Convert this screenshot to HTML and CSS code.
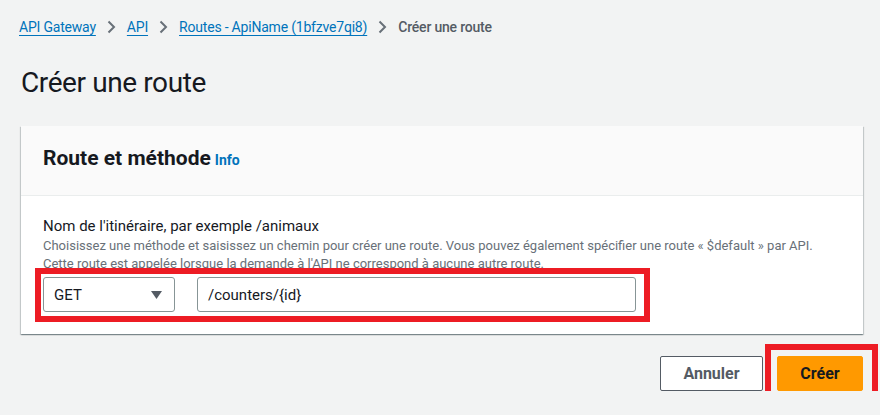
FILE: index.html
```html
<!DOCTYPE html>
<html lang="fr">
<head>
<meta charset="utf-8">
<title>Créer une route</title>
<link rel="stylesheet" href="styles.css">
</head>
<body>
<div class="page">
  <nav class="breadcrumbs">
    <a class="crumb" href="#">API Gateway</a>
    <svg class="chev" width="9" height="14" viewBox="0 0 9 14"><path d="M1.5 1.5 L7 7 L1.5 12.5" fill="none" stroke="#687078" stroke-width="2"/></svg>
    <a class="crumb" href="#">API</a>
    <svg class="chev" width="9" height="14" viewBox="0 0 9 14"><path d="M1.5 1.5 L7 7 L1.5 12.5" fill="none" stroke="#687078" stroke-width="2"/></svg>
    <a class="crumb" href="#">Routes - ApiName (1bfzve7qi8)</a>
    <svg class="chev" width="9" height="14" viewBox="0 0 9 14"><path d="M1.5 1.5 L7 7 L1.5 12.5" fill="none" stroke="#687078" stroke-width="2"/></svg>
    <span class="crumb-current">Créer une route</span>
  </nav>

  <h1 class="title">Créer une route</h1>

  <section class="card">
    <header class="card-header">
      <h2 class="card-title">Route et méthode</h2>
      <a class="info" href="#">Info</a>
    </header>
    <div class="card-body">
      <div class="label">Nom de l'itinéraire, par exemple /animaux</div>
      <div class="desc">Choisissez une méthode et saisissez un chemin pour créer une route. Vous pouvez également spécifier une route « $default » par API. Cette route est appelée lorsque la demande à l'API ne correspond à aucune autre route.</div>
      <div class="route-row">
        <div class="select">
          <span>GET</span>
          <svg width="11" height="8" viewBox="0 0 11 8"><polygon points="0,0 11,0 5.5,8" fill="#545b64"/></svg>
        </div>
        <div class="input">/counters/{id}</div>
      </div>
    </div>
  </section>

  <div class="actions">
    <button class="btn btn-secondary">Annuler</button>
    <span class="highlight"><button class="btn btn-primary">Créer</button></span>
  </div>
</div>
</body>
</html>
```
FILE: styles.css
```css
html, body {
  margin: 0;
  padding: 0;
  background: #f2f3f3;
}
body {
  font-family: Roboto, "Noto Sans", Arial, sans-serif;
  color: #16191f;
}
.page {
  padding: 17px 17px 0 21px;
}
.breadcrumbs {
  display: flex;
  align-items: center;
  height: 20px;
  font-size: 14px;
  line-height: 20px;
  letter-spacing: -0.2px;
  margin-left: -2px;
}
.crumb {
  color: #0073bb;
  text-decoration: underline;
  text-underline-offset: 3px;
  text-decoration-thickness: 1px;
}
.chev {
  margin: 0 11px;
  flex: none;
}
.crumb-current {
  color: #545b64;
  font-weight: 500;
}
.title {
  margin: 29px 0 0 0;
  font-size: 28px;
  line-height: 34px;
  font-weight: 400;
  letter-spacing: -0.4px;
}
.card {
  margin-top: 26px;
  background: #fff;
  box-shadow: 0 1px 1px 0 rgba(0,28,36,.3), 1px 1px 1px 0 rgba(0,28,36,.15), -1px 1px 1px 0 rgba(0,28,36,.15);
}
.card-header {
  background: #fafafa;
  border-bottom: 1px solid #eaeded;
  padding: 19px 22px 24px 22px;
  display: flex;
  align-items: baseline;
}
.card-title {
  margin: 0;
  font-size: 21px;
  line-height: 26px;
  font-weight: 700;
}
.info {
  margin-left: 4px;
  font-size: 14px;
  font-weight: 700;
  color: #0073bb;
  text-decoration: none;
}
.card-body {
  padding: 19px 22px 18px 22px;
}
.label {
  font-size: 15px;
  line-height: 22px;
}
.desc {
  font-size: 13px;
  line-height: 18px;
  color: #687078;
}
.route-row {
  display: flex;
  align-items: center;
  gap: 22px;
  width: fit-content;
  margin: 1px -8px 0 -2px;
  padding: 3px 8px 4px 2px;
  outline: 6px solid #ed1c24;
}
.select, .input {
  box-sizing: border-box;
  height: 35px;
  border: 1px solid #879596;
  border-radius: 3px;
  background: #fff;
  font-size: 15px;
  display: flex;
  align-items: center;
}
.select {
  width: 132px;
  padding: 0 12px 0 10px;
  justify-content: space-between;
}
.input {
  width: 439px;
  padding: 0 10px;
}
.actions {
  display: flex;
  justify-content: flex-end;
  align-items: center;
  gap: 14px;
  margin-top: 22px;
}
.btn {
  box-sizing: border-box;
  height: 35px;
  font-family: Roboto, "Noto Sans", Arial, sans-serif;
  font-size: 16px;
  font-weight: 700;
  border-radius: 2px;
  cursor: pointer;
}
.btn-secondary {
  width: 103px;
  background: #fff;
  color: #545b64;
  border: 1px solid #545b64;
}
.btn-primary {
  width: 86px;
  background: #ff9900;
  color: #16191f;
  border: 1px solid #ff9900;
}
.highlight {
  display: inline-flex;
  padding: 6px 9px 7px 6px;
  margin: -6px -9px -7px -6px;
  outline: 6px solid #ed1c24;
}
```
